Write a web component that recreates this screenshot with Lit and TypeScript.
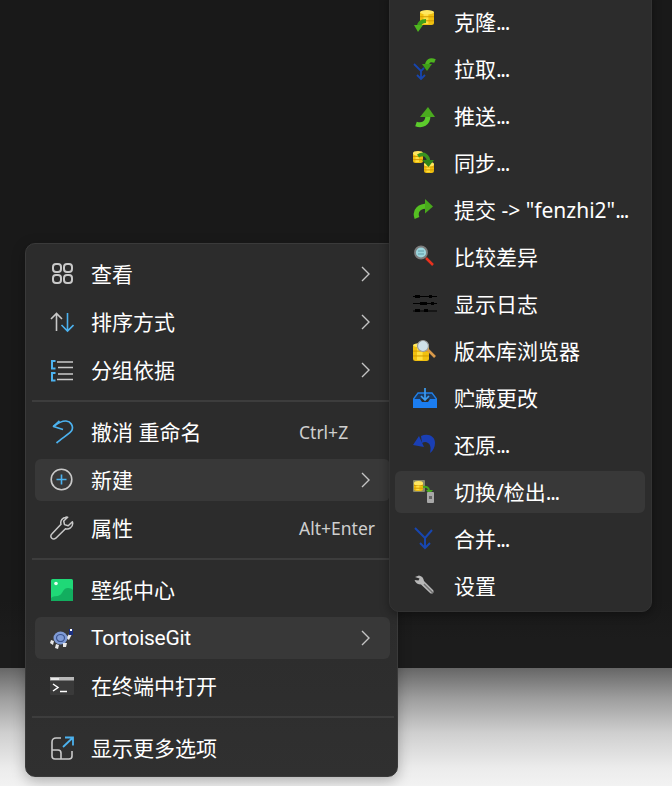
import { LitElement, html, css, svg } from "lit";
import { customElement } from "lit/decorators.js";

const G = "#c9c9c9";
const B = "#4cb2ef";
const db = (x: number, y: number, w: number, h: number) => svg`
  <rect x=${x} y=${y + 1} width=${w} height=${h - 1} rx="2.5" fill="#f0c010"/>
  <rect x=${x + w * 0.25} y=${y + 3} width=${w * 0.35} height=${h - 4} fill="#ffdf40"/>
  <path d="M${x} ${y + h * 0.45}h${w}M${x} ${y + h * 0.72}h${w}" stroke="#d49a00" stroke-width="1"/>
  <ellipse cx=${x + w / 2} cy=${y + 2.2} rx=${w / 2} ry="2.2" fill="#ffe760"/>`;

const I = (body: unknown) => html`<svg class="ico" viewBox="0 0 24 24" width="24" height="24" fill="none">${body}</svg>`;

const icons: Record<string, unknown> = {
  view: I(svg`<g stroke=${G} stroke-width="2"><rect x="3" y="2" width="8" height="8" rx="3"/><rect x="14" y="2" width="8" height="8" rx="3"/><rect x="3" y="13" width="8" height="8" rx="3"/><rect x="14" y="13" width="8" height="8" rx="3"/></g>`),
  sort: I(svg`<path d="M6.500 21V3.500M1 9l5.500-5.500L12 9" stroke=${G} stroke-width="1.600"/><path d="M17.500 3v18M11.500 15l6 6 6-6" stroke=${B} stroke-width="1.600"/>`),
  group: I(svg`<path d="M5.500 3H2v7.500h3.500M5.500 15H2v7.500h3.500" stroke=${B} stroke-width="2"/><path d="M7 4h16M8 9.500h15M8 16h15M7 21.500h16" stroke=${G} stroke-width="1.600"/>`),
  undo: I(svg`<path d="M9.500 1 3.500 6.500l9.500 3" stroke=${B} stroke-width="1.700" stroke-linejoin="round"/><path d="M3.500 6.500C8 3 12 .8 16 1c5 .5 7.500 5 6 9-1 3-10 8-15.500 13" stroke=${B} stroke-width="1.700"/>`),
  plus: I(svg`<circle cx="11.500" cy="11.500" r="10.300" stroke=${G} stroke-width="1.600"/><path d="M11.500 6.500v10M6.500 11.500h10" stroke=${B} stroke-width="1.600"/>`),
  wrench: I(svg`<path d="M16 1.500c-3.500 0-6 3.200-5 6.800L1.800 18c-1.500 1.500-1 3.300 0 4.200s2.700 1 4 0l9.700-9.500c3.500 1 7.200-1.500 7.200-5.200 0-.7 0-1-.3-1.700l-4.200 4-3.700-1.200-.8-3.600 4-3.700c-.6-.2-1-.3-1.700-.3z" stroke=${G} stroke-width="1.500" stroke-linejoin="round"/>`),
  paper: I(svg`<rect x="1" y="1" width="22" height="22" rx="1.500" fill="#1fd877"/><circle cx="6" cy="5.500" r="1.800" fill="#e8fff2"/><path d="M1 20c4-3 6-1 9-3 3-2 3-7 8-7 2.500 0 4 .8 5 2v11H1z" fill="#12ae5f"/>`),
  turtle: I(svg`<path d="M16 12l4-5 2 1-3 6z" fill="#e8e8e8"/><rect x="19" y="3" width="4" height="6" fill="#1a2f80"/><rect x="20" y="3" width="2" height="2" fill="#fff"/><ellipse cx="10.500" cy="12" rx="7" ry="6.500" fill="#7f9bd6"/><ellipse cx="10.500" cy="12" rx="4" ry="3.500" stroke="#3d5590" stroke-width="1.200"/><path d="M1 14l3 1-1 4-3-2zM6 18l3 1-1 4-3-1zM13 17l4 0-1 4-3 0z" fill="#e8e8e8"/>`),
  term: I(svg`<rect x="0" y="3" width="24" height="18" rx="1" fill="#3a3a3a"/><rect x="0" y="3" width="24" height="3.500" fill="#b8b8b8"/><rect x="1" y="4" width="8" height="2" fill="#e8e8e8"/><path d="M3 10l5 3.500L3 17" stroke="#fff" stroke-width="1.500"/><path d="M10 17.500h7" stroke="#fff" stroke-width="1.500"/>`),
  more: I(svg`<path d="M11 2H6a4 4 0 0 0-4 4v14a3 3 0 0 0 3 3h14a3 3 0 0 0 3-3v-5M2 14h6a3 3 0 0 1 3 3v6" stroke=${G} stroke-width="1.600"/><path d="M13 11 22.500 2M15 1.500h8v8" stroke=${B} stroke-width="1.800"/>`),

  clone: I(svg`${db(7, 0, 14, 15)}<path d="M13 11C8 11 6 13 5.500 17" stroke="#3f9f1a" stroke-width="4"/><path d="M1 15h9l-5 7z" fill="#4eb51f"/>`),
  pull: I(svg`<path d="M1 7l7 7 3-3M8 14v8M4 18l4 4 4-4" stroke="#1746b0" stroke-width="1.800"/><path d="M22 4c-5-2-8 0-8 5" stroke="#4eb51f" stroke-width="4"/><path d="M9 7h10l-5 7z" fill="#3e9e18"/>`),
  push: I(svg`<path d="M3 20c6 2 12 0 12-9" stroke="#5ccc2c" stroke-width="5"/><path d="M7 13 15 3l7 10z" fill="#4aaa1e"/>`),
  sync: I(svg`${db(0, 0, 10, 12)}${db(11, 11, 10, 11)}<path d="M5 5c6-4 11 0 10.500 7" stroke="#3a9420" stroke-width="3.500"/><path d="M9 9h12l-5.500 7z" fill="#2f8518"/>`),
  commit: I(svg`<path d="M4 20c-3-8 3-12 11-12" stroke="#55c022" stroke-width="5"/><path d="M12 1l8 7.500-8 7z" fill="#48a81c"/>`),
  compare: I(svg`<path d="M13 13l7 7" stroke="#e8321f" stroke-width="2.500"/><circle cx="8" cy="7.500" r="6" fill="#9bd4dc" stroke="#7d7d7d" stroke-width="1.800"/><path d="M5 6h6M5 9h6" stroke="#5f9aa5"/>`),
  log: I(svg`<path d="M0 4.500h24M0 11.500h24M0 19h24" stroke="#000" stroke-width="1"/><path d="M2 3h5v3H2zM16 3h3v3h-3zM7 10h7v3H7zM18 10h3v3h-3zM2 17h5v3H2zM11 17h4v3h-4z" fill="#000"/>`),
  repo: I(svg`${db(0, 4, 16, 18)}<path d="M14 10l8 8" stroke="#d99a4a" stroke-width="2.600"/><circle cx="10" cy="7" r="5.500" fill="#cfe0e8" stroke="#9a9a9a" stroke-width="1.200"/>`),
  stash: I(svg`<path d="M0.500 13 5 7h14l4.500 6" fill="#1c3a60" stroke="#1f7fe8" stroke-width="1.300"/><path d="M0 13h7l2 3h6l2-3h7v9H0z" fill="#1b7df0"/><path d="M12 2v12M8 10l4 4 4-4" stroke="#3d9cf0" stroke-width="1.700"/>`),
  revert: I(svg`<path d="M8 3C15 0 22 3 22 10c0 4-2 8-5 10 1-4 1-8-2-10-2-1.500-4-1-6 0z" fill="#1a3fb4"/><path d="M6 3 0 12l11 2z" fill="#1a3fb4"/>`),
  checkout: I(svg`<rect x="0" y="0" width="12" height="12" rx="1" fill="#8a8a6a"/>${db(1, 1, 9, 10)}<path d="M10 7c4-1 6 1 6 4" stroke="#44a81c" stroke-width="2"/><path d="M13 10h7l-3.500 4z" fill="#44a81c"/><rect x="14" y="12" width="7" height="11" rx="1" fill="#a8a8a8"/><rect x="16" y="16" width="3" height="3" fill="#666"/>`),
  merge: I(svg`<path d="M2 1l10 10 7-8M12 11v10M7 16l5 5 5-5" stroke="#1746b0" stroke-width="2"/>`),
  settings: I(svg`<path d="M2 3l4-1.500c3 .5 4.500 2.500 5 5.500l9 9c1 1 .5 2.500 0 3s-2 1-3 0l-9-8.500c-3 0-5.500-1.500-6.500-4.500l4 .5 1-2z" fill="#b8b8b8"/><path d="M11 10l9 9" stroke="#707070" stroke-width="1.500"/>`),
};

type Row = { i: string; t: string; k?: string; sub?: boolean; on?: boolean; narrow?: boolean } | null;

const mainRows: Row[] = [
  { i: "view", t: "查看", sub: true },
  { i: "sort", t: "排序方式", sub: true },
  { i: "group", t: "分组依据", sub: true },
  null,
  { i: "undo", t: "撤消 重命名", k: "Ctrl+Z" },
  { i: "plus", t: "新建", sub: true, on: true },
  { i: "wrench", t: "属性", k: "Alt+Enter" },
  null,
  { i: "paper", t: "壁纸中心" },
  { i: "turtle", t: "TortoiseGit", sub: true, on: true, narrow: true },
  { i: "term", t: "在终端中打开" },
  null,
  { i: "more", t: "显示更多选项" },
];

const subRows: Row[] = [
  { i: "clone", t: "克隆..." },
  { i: "pull", t: "拉取..." },
  { i: "push", t: "推送..." },
  { i: "sync", t: "同步..." },
  { i: "commit", t: '提交 -> "fenzhi2"...' },
  { i: "compare", t: "比较差异" },
  { i: "log", t: "显示日志" },
  { i: "repo", t: "版本库浏览器" },
  { i: "stash", t: "贮藏更改" },
  { i: "revert", t: "还原..." },
  { i: "checkout", t: "切换/检出...", on: true },
  { i: "merge", t: "合并..." },
  { i: "settings", t: "设置" },
];

@customElement("app-root")
export class AppRoot extends LitElement {
  static styles = css`
    :host {
      display: block;
      position: relative;
      width: 672px;
      height: 786px;
      overflow: hidden;
      font-family: "Noto Sans", "Noto Sans CJK SC", sans-serif;
      color: #fff;
    }
    .desk { height: 668px; background: linear-gradient(#191919 0, #191919 600px, #1c1c1c 640px, #1c1c1c 100%); }
    .light { height: 118px; background: linear-gradient(#666 0, #9c9c9c 25%, #cfcfcf 55%, #ececec 85%, #f2f2f2 100%); }
    .menu {
      position: absolute;
      box-sizing: border-box;
      display: flex;
      flex-direction: column;
      background: #2c2c2c;
      border: 1px solid #3a3a3a;
      border-radius: 10px;
      box-shadow: 0 4px 14px rgba(0, 0, 0, 0.28);
    }
    .main {
      left: 25px; top: 243px; width: 373px; height: 534px;
      padding: 9px 7px 7px 9px;
      background: linear-gradient(#2c2c2c 0, #2c2c2c 70%, #303030 100%);
      gap: 6px;
    }
    .sub {
      left: 389px; top: -10px; width: 263px; height: 622px;
      padding: 10px 6px 4px 5px;
      gap: 5px;
      border-color: #333;
      box-shadow: 0 3px 10px rgba(0, 0, 0, 0.35);
    }
    .row {
      flex: none;
      height: 42px;
      display: flex;
      align-items: center;
      border-radius: 6px;
      box-sizing: border-box;
      padding: 0 15px;
      font-size: 21px;
      line-height: 42px;
      white-space: nowrap;
    }
    .sub .row { padding-left: 18px; }
    .row.on { background: #383838; }
    .ico { flex: none; margin-right: 17px; display: block; }
    .label { flex: 1; }
    .label.narrow { font-family: Roboto, "Noto Sans", sans-serif; letter-spacing: -0.300px; }
    .dots { letter-spacing: -1.300px; }
    .key { flex: none; width: 76px; font-size: 17.500px; color: #cfcfcf; }
    .chev { flex: none; margin-right: 5px; display: block; }
    .sep { flex: none; height: 2px; margin: 3px -4px 3px -3px; background: #3d3d3d; }
  `;

  private renderRow(r: Row) {
    if (!r) return html`<div class="sep"></div>`;
    const dotted = r.t.endsWith("...");
    const head = dotted ? r.t.slice(0, -3) : r.t;
    return html`<div class="row ${r.on ? "on" : ""}">
      ${icons[r.i]}
      <span class="label ${r.narrow ? "narrow" : ""}">${head}${dotted ? html`<span class="dots">...</span>` : ""}</span>
      ${r.k ? html`<span class="key">${r.k}</span>` : ""}
      ${r.sub
        ? html`<svg class="chev" width="9" height="16" viewBox="0 0 9 16" fill="none"><path d="M1 1l7 7-7 7" stroke="#c4c4c4" stroke-width="1.400"/></svg>`
        : ""}
    </div>`;
  }

  render() {
    return html`
      <div class="desk"></div>
      <div class="light"></div>
      <div class="menu main">${mainRows.map((r) => this.renderRow(r))}</div>
      <div class="menu sub">${subRows.map((r) => this.renderRow(r))}</div>
    `;
  }
}
